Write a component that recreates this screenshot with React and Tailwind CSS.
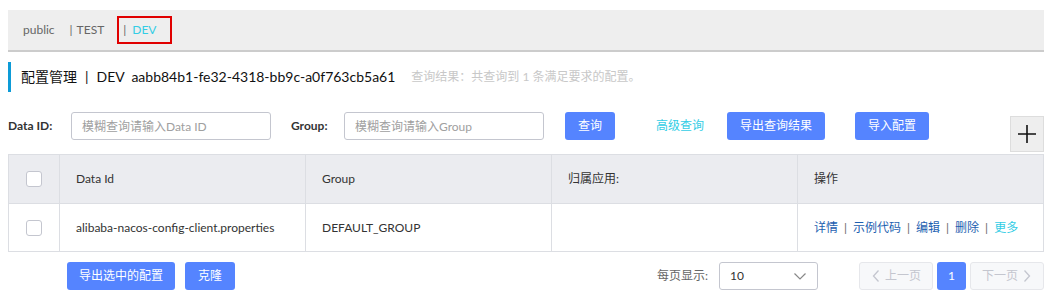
// Lista de configuracoes (Nacos). Namespace DEV selecionado.

const FONT = { fontFamily: 'Lato, "Noto Sans CJK SC", sans-serif' };

function Checkbox() {
  return <span className="block w-4 h-4 rounded-[3px] border border-[#c4c6cf] bg-white" />;
}

function Btn({ children, className = '' }) {
  return (
    <button className={`h-7 rounded-[3px] bg-[#5584ff] text-white text-xs px-3 ${className}`}>{children}</button>
  );
}

export default function App() {
  return (
    <div className="px-2 pt-[10px] w-[1052px] h-[304px] bg-white text-[#333] overflow-hidden" style={FONT}>
      {/* namespaces */}
      <div className="h-[42px] bg-[#eeeeee] border-b-2 border-[#cccccc] flex items-center pl-[15px] text-xs text-[#666]">
        <span>public</span>
        <span className="ml-[15px]">|<span className="ml-[4px]">TEST</span></span>
        <span className="ml-[13px] h-[28px] w-[55px] border-2 border-[#e00000] flex items-center pl-[4px] text-[#33cde5]">
          <span className="text-[#666] mr-[6px]">|</span>DEV
        </span>
      </div>

      {/* titulo */}
      <div className="mt-[10px] h-[30px] border-l-[3px] border-[#0d9bd7] flex items-center pl-[10px]">
        <span className="text-sm text-[#111]">配置管理<span className="mx-[8px]">|</span>DEV&nbsp; aabb84b1-fe32-4318-bb9c-a0f763cb5a61</span>
        <span className="ml-[16px] text-xs text-[#c8c8c8]">查询结果：共查询到 1 条满足要求的配置。</span>
      </div>

      {/* busca */}
      <div className="mt-[20px] flex items-start">
        <div className="flex items-center h-7 text-xs">
          <span className="font-bold text-[#333] w-[63px]">Data ID:</span>
          <input
            className="w-[200px] h-7 border border-[#c4c6cf] rounded-[3px] px-[10px] text-xs outline-none placeholder:text-[#a0a0a0]"
            placeholder="模糊查询请输入Data ID"
          />
          <span className="font-bold text-[#333] ml-[20px] w-[53px]">Group:</span>
          <input
            className="w-[200px] h-7 border border-[#c4c6cf] rounded-[3px] px-[10px] text-xs outline-none placeholder:text-[#a0a0a0]"
            placeholder="模糊查询请输入Group"
          />
          <Btn className="ml-[21px] w-[50px]">查询</Btn>
          <span className="ml-[41px] text-[#33cde5]">高级查询</span>
          <Btn className="ml-[23px] w-[98px]">导出查询结果</Btn>
          <Btn className="ml-[30px] w-[74px]">导入配置</Btn>
        </div>
        <div className="ml-auto mt-1 w-[34px] h-[36px] bg-[#eeeeee] border border-[#dddddd] flex items-center justify-center">
          <svg width="20" height="20" viewBox="0 0 20 20">
            <path d="M10 1v18M1 10h18" stroke="#111" strokeWidth="1.6" />
          </svg>
        </div>
      </div>

      {/* tabela */}
      <div className="mt-[2px] border border-[#dcdee3] text-xs">
        <div className="grid grid-cols-[51px_246px_246px_246px_1fr] h-12 bg-[#ebecf0] text-[#333]">
          <div className="flex items-center justify-center border-r border-[#dcdee3]"><Checkbox /></div>
          <div className="flex items-center pl-4 border-r border-[#dcdee3]">Data Id</div>
          <div className="flex items-center pl-4 border-r border-[#dcdee3]">Group</div>
          <div className="flex items-center pl-4 border-r border-[#dcdee3]">归属应用:</div>
          <div className="flex items-center pl-4">操作</div>
        </div>
        <div className="grid grid-cols-[51px_246px_246px_246px_1fr] h-12 border-t border-[#dcdee3] text-[#333]">
          <div className="flex items-center justify-center border-r border-[#dcdee3]"><Checkbox /></div>
          <div className="flex items-center pl-4 border-r border-[#dcdee3]">alibaba-nacos-config-client.properties</div>
          <div className="flex items-center pl-4 border-r border-[#dcdee3]">DEFAULT_GROUP</div>
          <div className="border-r border-[#dcdee3]" />
          <div className="flex items-center pl-4 gap-[6px] text-[#1d5fb0]">
            <span>详情</span><span className="text-[#666]">|</span>
            <span>示例代码</span><span className="text-[#666]">|</span>
            <span>编辑</span><span className="text-[#666]">|</span>
            <span>删除</span><span className="text-[#666]">|</span>
            <span className="text-[#33cde5]">更多</span>
          </div>
        </div>
      </div>

      {/* rodape */}
      <div className="mt-[10px] flex items-center text-xs">
        <Btn className="ml-[59px] w-[108px]">导出选中的配置</Btn>
        <Btn className="ml-[10px] w-[50px]">克隆</Btn>
        <span className="ml-auto text-[#666]">每页显示:</span>
        <div className="ml-[11px] w-[99px] h-7 border border-[#c4c6cf] rounded-[3px] flex items-center justify-between pl-[10px] pr-[10px] text-[#333]">
          <span>10</span>
          <svg width="14" height="14" viewBox="0 0 14 14">
            <path d="M1.5 4.5 7 10l5.5-5.5" fill="none" stroke="#888" strokeWidth="1.2" />
          </svg>
        </div>
        <button className="ml-[41px] w-[74px] h-7 rounded-[3px] bg-[#f7f8fa] border border-[#e6e7eb] text-[#c4c6cf] flex items-center justify-center gap-1">
          <svg width="10" height="14" viewBox="0 0 10 14"><path d="M7.5 1.5 2.5 7l5 5.5" fill="none" stroke="#c4c6cf" strokeWidth="1.3" /></svg>
          上一页
        </button>
        <button className="ml-[4px] w-[29px] h-7 rounded-[3px] bg-[#5584ff] text-white">1</button>
        <button className="ml-[4px] w-[74px] h-7 rounded-[3px] bg-[#f7f8fa] border border-[#e6e7eb] text-[#c4c6cf] flex items-center justify-center gap-1">
          下一页
          <svg width="10" height="14" viewBox="0 0 10 14"><path d="M2.5 1.5 7.5 7l-5 5.5" fill="none" stroke="#c4c6cf" strokeWidth="1.3" /></svg>
        </button>
      </div>
    </div>
  );
}
